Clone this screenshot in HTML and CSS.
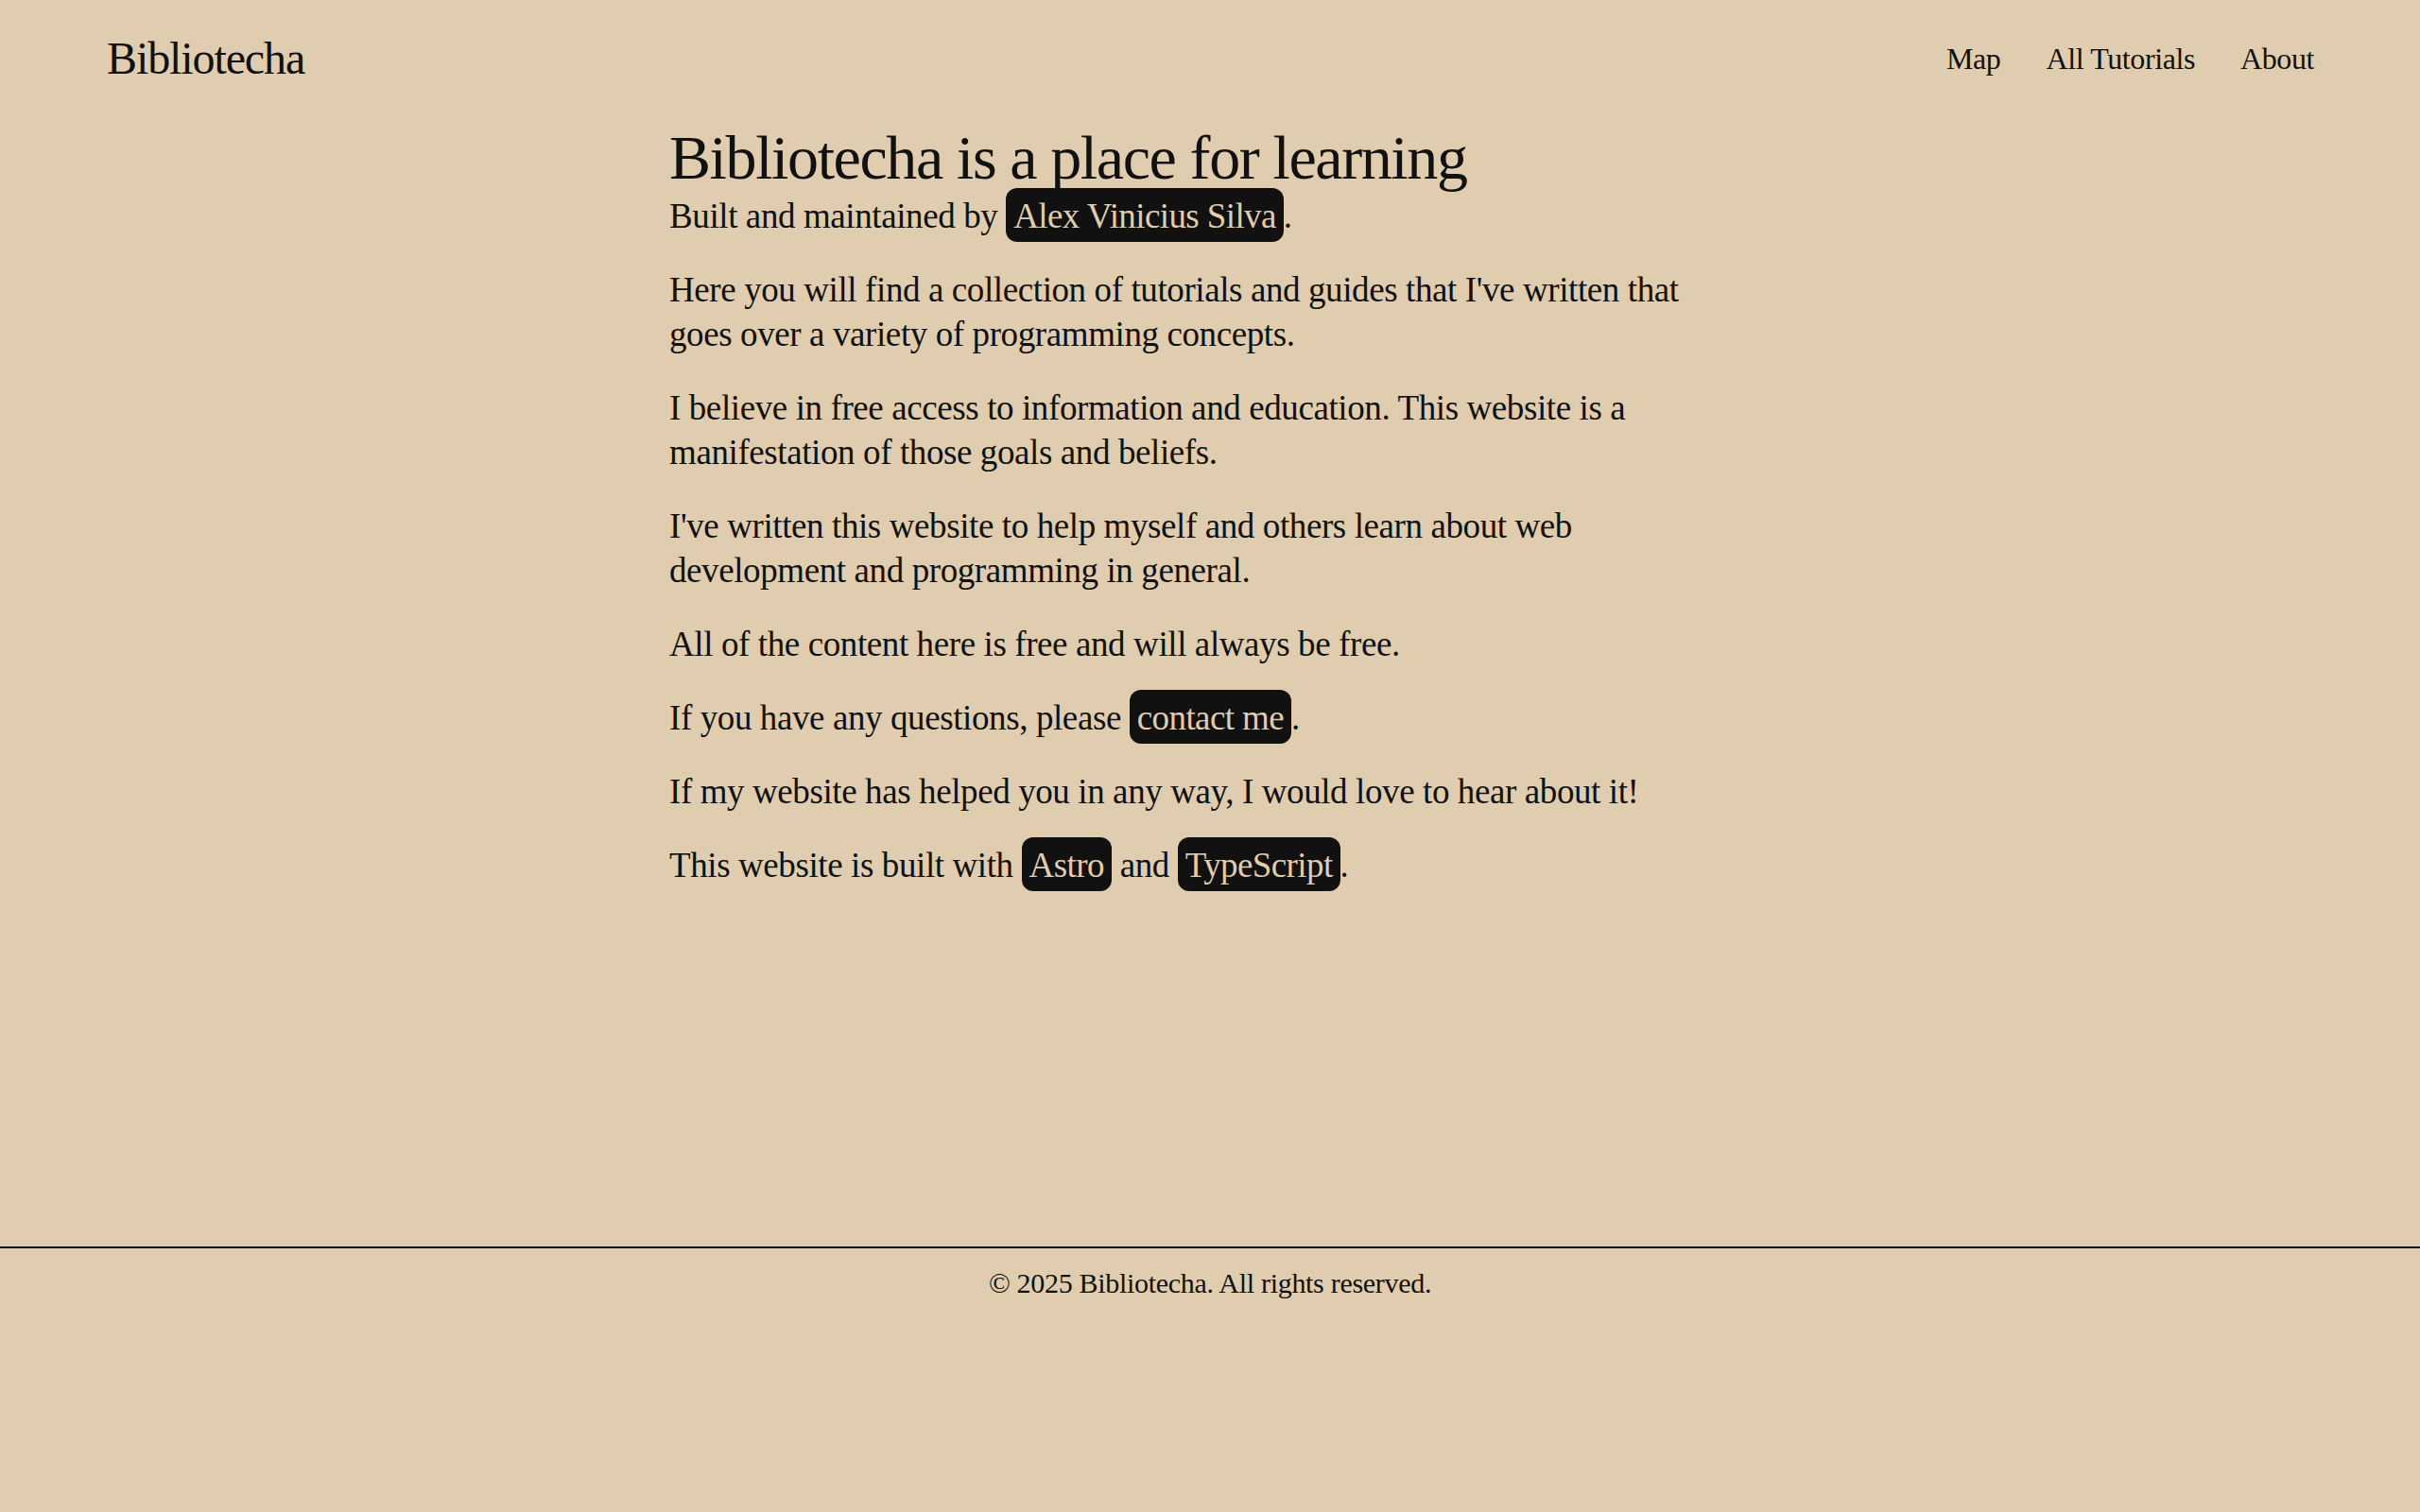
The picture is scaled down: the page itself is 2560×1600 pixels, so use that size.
FILE: index.html
```html
<!DOCTYPE html>
<html lang="en">
<head>
<meta charset="utf-8">
<title>Bibliotecha</title>
<link rel="stylesheet" href="styles.css">
</head>
<body>
<header class="site-header">
  <a class="logo" href="#">Bibliotecha</a>
  <nav class="nav">
    <a href="#">Map</a>
    <a href="#">All Tutorials</a>
    <a href="#">About</a>
  </nav>
</header>
<main class="content">
  <h1 class="title">Bibliotecha is a place for learning</h1>
  <p>Built and maintained by <a class="pill" href="#">Alex Vinicius Silva</a>.</p>
  <p>Here you will find a collection of tutorials and guides that I've written that goes over a variety of programming concepts.</p>
  <p>I believe in free access to information and education. This website is a manifestation of those goals and beliefs.</p>
  <p>I've written this website to help myself and others learn about web development and programming in general.</p>
  <p>All of the content here is free and will always be free.</p>
  <p>If you have any questions, please <a class="pill" href="#">contact me</a>.</p>
  <p>If my website has helped you in any way, I would love to hear about it!</p>
  <p>This website is built with <a class="pill" href="#">Astro</a> and <a class="pill" href="#">TypeScript</a>.</p>
</main>
<footer class="site-footer">
  <p>© 2025 Bibliotecha. All rights reserved.</p>
</footer>
</body>
</html>
```
FILE: styles.css
```css
html, body {
  margin: 0;
  padding: 0;
}
body {
  background: #e0ccae;
  color: #111111;
  font-family: "Liberation Serif", "Times New Roman", serif;
}
a {
  color: inherit;
  text-decoration: none;
}
.site-header {
  display: flex;
  justify-content: space-between;
  align-items: center;
  padding: 34px 112px 39px 113px;
}
.logo {
  font-size: 48px;
  line-height: 56px;
  letter-spacing: -1.1px;
}
.nav {
  display: flex;
  gap: 48px;
}
.nav a {
  font-size: 32px;
  line-height: 36px;
  letter-spacing: -0.4px;
}
.content {
  width: 1144px;
  margin: 0 auto;
  min-height: 1190px;
  box-sizing: border-box;
}
.title {
  margin: 0;
  font-size: 66px;
  line-height: 76px;
  font-weight: normal;
  letter-spacing: -1.4px;
}
.content p {
  max-width: 1110px;
  margin: 0 0 31px;
  font-size: 37px;
  line-height: 47px;
  letter-spacing: -0.4px;
}
.pill {
  background: #111111;
  color: #e0ccae;
  padding: 9px 8px 7px;
  border-radius: 12px;
  letter-spacing: -0.6px;
}
.site-footer {
  border-top: 2px solid #111111;
  padding: 17px 0;
  text-align: center;
}
.site-footer p {
  margin: 0;
  font-size: 30px;
  line-height: 40px;
  letter-spacing: -0.3px;
}
```
